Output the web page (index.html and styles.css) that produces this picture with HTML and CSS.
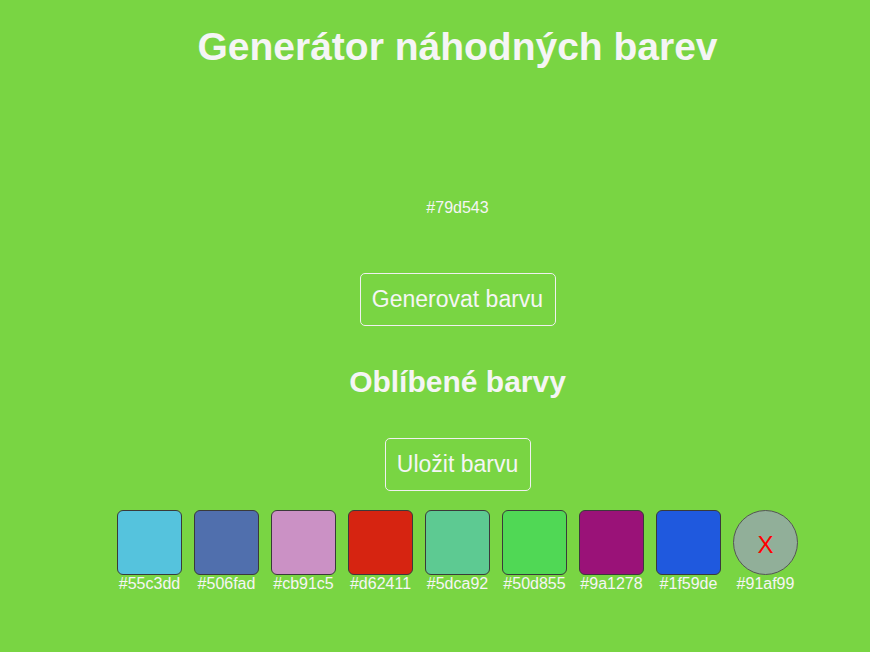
FILE: index.html
```html
<!DOCTYPE html>
<html lang="cs">
<head>
<meta charset="utf-8">
<title>Generátor náhodných barev</title>
<link rel="stylesheet" href="styles.css">
</head>
<body>
<main class="app">
  <h1 class="title">Generátor náhodných barev</h1>
  <div class="current-hex">#79d543</div>
  <button class="btn btn-generate">Generovat barvu</button>
  <h2 class="subtitle">Oblíbené barvy</h2>
  <button class="btn btn-save">Uložit barvu</button>
  <div class="favorites">
    <div class="fav"><div class="swatch" style="background:#55c3dd"></div><span class="fav-label">#55c3dd</span></div>
    <div class="fav"><div class="swatch" style="background:#506fad"></div><span class="fav-label">#506fad</span></div>
    <div class="fav"><div class="swatch" style="background:#cb91c5"></div><span class="fav-label">#cb91c5</span></div>
    <div class="fav"><div class="swatch" style="background:#d62411"></div><span class="fav-label">#d62411</span></div>
    <div class="fav"><div class="swatch" style="background:#5dca92"></div><span class="fav-label">#5dca92</span></div>
    <div class="fav"><div class="swatch" style="background:#50d855"></div><span class="fav-label">#50d855</span></div>
    <div class="fav"><div class="swatch" style="background:#9a1278"></div><span class="fav-label">#9a1278</span></div>
    <div class="fav"><div class="swatch" style="background:#1f59de"></div><span class="fav-label">#1f59de</span></div>
    <div class="fav"><div class="swatch swatch-remove" style="background:#91af99"><span class="remove-x">X</span></div><span class="fav-label">#91af99</span></div>
  </div>
</main>
</body>
</html>
```
FILE: styles.css
```css
html, body {
  margin: 0;
  padding: 0;
}
body {
  background: #79d543;
  font-family: "Liberation Sans", Arial, sans-serif;
  color: #f5f5f5;
  width: 870px;
  height: 652px;
  overflow: hidden;
}
.app {
  display: flex;
  flex-direction: column;
  align-items: center;
  padding-left: 45px;
}
.title {
  margin: 24px 0 0;
  font-size: 39px;
  line-height: 45px;
  font-weight: bold;
}
.current-hex {
  margin-top: 130px;
  font-size: 16px;
  line-height: 18px;
}
.btn {
  font-family: "Liberation Sans", Arial, sans-serif;
  background: transparent;
  color: #f5f5f5;
  border: 1px solid #f0f0f0;
  border-radius: 5px;
  font-size: 23px;
  line-height: 27px;
  padding: 12px 10px;
  cursor: pointer;
}
.btn-generate {
  margin-top: 56px;
  width: 196px;
}
.btn-save {
  margin-top: 39px;
  width: 146px;
}
.subtitle {
  margin: 39px 0 0;
  font-size: 30px;
  line-height: 34px;
  font-weight: bold;
}
.favorites {
  margin-top: 19px;
  display: flex;
  gap: 12px;
}
.fav {
  display: flex;
  flex-direction: column;
  align-items: center;
  width: 65px;
}
.swatch {
  box-sizing: border-box;
  width: 65px;
  height: 65px;
  border: 1px solid #3a3a3a;
  border-radius: 6px;
}
.swatch-remove {
  border-radius: 50%;
  border-color: #555;
  display: flex;
  align-items: center;
  justify-content: center;
}
.remove-x {
  color: #ff0000;
  font-size: 24px;
  line-height: 24px;
  margin-top: 4px;
}
.fav-label {
  font-size: 16px;
  line-height: 18px;
  white-space: nowrap;
}
```
